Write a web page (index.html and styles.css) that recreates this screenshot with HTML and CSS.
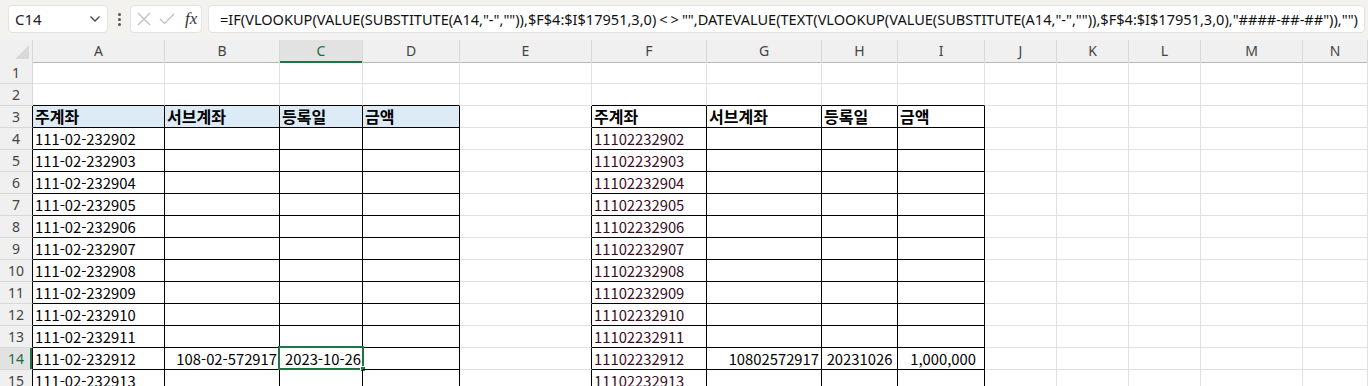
FILE: index.html
```html
<!DOCTYPE html>
<html lang="ko">
<head>
<meta charset="utf-8">
<title>Excel</title>
<link rel="stylesheet" href="styles.css">
</head>
<body>
<div class="topbar">
  <div class="namebox"><span class="nb-text">C14</span>
    <svg class="chev" width="12" height="8" viewBox="0 0 12 8"><path d="M1.5 1.5 L6 6 L10.5 1.5" fill="none" stroke="#444" stroke-width="1.3"/></svg>
  </div>
  <div class="dots"><i></i><i></i><i></i></div>
  <div class="fxbox">
    <svg width="14" height="14" viewBox="0 0 14 14"><path d="M1 1 L13 13 M13 1 L1 13" stroke="#bdbdbd" stroke-width="1.2" fill="none"/></svg>
    <svg width="16" height="12" viewBox="0 0 16 12"><path d="M1 6 L5.5 10.5 L15 1" stroke="#bdbdbd" stroke-width="1.2" fill="none"/></svg>
    <span class="fx">fx</span>
  </div>
  <div class="formula">=IF(VLOOKUP(VALUE(SUBSTITUTE(A14,"-","")),$F$4:$I$17951,3,0)<span class="ne">&lt;&gt;</span>"",DATEVALUE(TEXT(VLOOKUP(VALUE(SUBSTITUTE(A14,"-","")),$F$4:$I$17951,3,0),"####-##-##")),"")</div>
</div>

<div class="sheet">
  <div class="row hdr">
    <div class="c corner"></div><div class="c">A</div><div class="c">B</div><div class="c sel">C</div><div class="c">D</div><div class="c">E</div><div class="c">F</div><div class="c">G</div><div class="c">H</div><div class="c">I</div><div class="c">J</div><div class="c">K</div><div class="c">L</div><div class="c">M</div><div class="c">N</div>
  </div>
  <div class="row">
    <div class="c rh">1</div><div class="c"></div><div class="c"></div><div class="c"></div><div class="c"></div><div class="c"></div><div class="c"></div><div class="c"></div><div class="c"></div><div class="c"></div><div class="c"></div><div class="c"></div><div class="c"></div><div class="c"></div><div class="c"></div>
  </div>
  <div class="row">
    <div class="c rh">2</div><div class="c tb"></div><div class="c tb"></div><div class="c tb"></div><div class="c tb"></div><div class="c"></div><div class="c tb"></div><div class="c tb"></div><div class="c tb"></div><div class="c tb"></div><div class="c"></div><div class="c"></div><div class="c"></div><div class="c"></div><div class="c"></div>
  </div>
  <div class="row">
    <div class="c rh tl">3</div><div class="c t th">주계좌</div><div class="c t th">서브계좌</div><div class="c t th">등록일</div><div class="c t th">금액</div><div class="c tl"></div><div class="c t bold">주계좌</div><div class="c t bold">서브계좌</div><div class="c t bold">등록일</div><div class="c t bold">금액</div><div class="c"></div><div class="c"></div><div class="c"></div><div class="c"></div><div class="c"></div>
  </div>
  <div class="row">
    <div class="c rh tl">4</div><div class="c t">111-02-232902</div><div class="c t"></div><div class="c t"></div><div class="c t"></div><div class="c tl"></div><div class="c t num">11102232902</div><div class="c t"></div><div class="c t"></div><div class="c t"></div><div class="c"></div><div class="c"></div><div class="c"></div><div class="c"></div><div class="c"></div>
  </div>
  <div class="row">
    <div class="c rh tl">5</div><div class="c t">111-02-232903</div><div class="c t"></div><div class="c t"></div><div class="c t"></div><div class="c tl"></div><div class="c t num">11102232903</div><div class="c t"></div><div class="c t"></div><div class="c t"></div><div class="c"></div><div class="c"></div><div class="c"></div><div class="c"></div><div class="c"></div>
  </div>
  <div class="row">
    <div class="c rh tl">6</div><div class="c t">111-02-232904</div><div class="c t"></div><div class="c t"></div><div class="c t"></div><div class="c tl"></div><div class="c t num">11102232904</div><div class="c t"></div><div class="c t"></div><div class="c t"></div><div class="c"></div><div class="c"></div><div class="c"></div><div class="c"></div><div class="c"></div>
  </div>
  <div class="row">
    <div class="c rh tl">7</div><div class="c t">111-02-232905</div><div class="c t"></div><div class="c t"></div><div class="c t"></div><div class="c tl"></div><div class="c t num">11102232905</div><div class="c t"></div><div class="c t"></div><div class="c t"></div><div class="c"></div><div class="c"></div><div class="c"></div><div class="c"></div><div class="c"></div>
  </div>
  <div class="row">
    <div class="c rh tl">8</div><div class="c t">111-02-232906</div><div class="c t"></div><div class="c t"></div><div class="c t"></div><div class="c tl"></div><div class="c t num">11102232906</div><div class="c t"></div><div class="c t"></div><div class="c t"></div><div class="c"></div><div class="c"></div><div class="c"></div><div class="c"></div><div class="c"></div>
  </div>
  <div class="row">
    <div class="c rh tl">9</div><div class="c t">111-02-232907</div><div class="c t"></div><div class="c t"></div><div class="c t"></div><div class="c tl"></div><div class="c t num">11102232907</div><div class="c t"></div><div class="c t"></div><div class="c t"></div><div class="c"></div><div class="c"></div><div class="c"></div><div class="c"></div><div class="c"></div>
  </div>
  <div class="row">
    <div class="c rh tl">10</div><div class="c t">111-02-232908</div><div class="c t"></div><div class="c t"></div><div class="c t"></div><div class="c tl"></div><div class="c t num">11102232908</div><div class="c t"></div><div class="c t"></div><div class="c t"></div><div class="c"></div><div class="c"></div><div class="c"></div><div class="c"></div><div class="c"></div>
  </div>
  <div class="row">
    <div class="c rh tl">11</div><div class="c t">111-02-232909</div><div class="c t"></div><div class="c t"></div><div class="c t"></div><div class="c tl"></div><div class="c t num">11102232909</div><div class="c t"></div><div class="c t"></div><div class="c t"></div><div class="c"></div><div class="c"></div><div class="c"></div><div class="c"></div><div class="c"></div>
  </div>
  <div class="row">
    <div class="c rh tl">12</div><div class="c t">111-02-232910</div><div class="c t"></div><div class="c t"></div><div class="c t"></div><div class="c tl"></div><div class="c t num">11102232910</div><div class="c t"></div><div class="c t"></div><div class="c t"></div><div class="c"></div><div class="c"></div><div class="c"></div><div class="c"></div><div class="c"></div>
  </div>
  <div class="row">
    <div class="c rh tl">13</div><div class="c t">111-02-232911</div><div class="c t"></div><div class="c t"></div><div class="c t"></div><div class="c tl"></div><div class="c t num">11102232911</div><div class="c t"></div><div class="c t"></div><div class="c t"></div><div class="c"></div><div class="c"></div><div class="c"></div><div class="c"></div><div class="c"></div>
  </div>
  <div class="row">
    <div class="c rh tl selrow">14</div><div class="c t">111-02-232912</div><div class="c t r">108-02-572917</div><div class="c t active">2023-10-26<span class="selbox"></span><span class="handle"></span></div><div class="c t"></div><div class="c tl"></div><div class="c t num">11102232912</div><div class="c t r">10802572917</div><div class="c t ctr">20231026</div><div class="c t r amt">1,000,000</div><div class="c"></div><div class="c"></div><div class="c"></div><div class="c"></div><div class="c"></div>
  </div>
  <div class="row">
    <div class="c rh tl">15</div><div class="c t">111-02-232913</div><div class="c t"></div><div class="c t"></div><div class="c t"></div><div class="c tl"></div><div class="c t num">11102232913</div><div class="c t"></div><div class="c t"></div><div class="c t"></div><div class="c"></div><div class="c"></div><div class="c"></div><div class="c"></div><div class="c"></div>
  </div>
</div>
</body>
</html>
```

FILE: styles.css
```css
* { box-sizing: border-box; }
html, body { margin: 0; padding: 0; }
body {
  width: 1368px;
  height: 386px;
  overflow: hidden;
  background: #ffffff;
  font-family: "Noto Sans CJK KR", "Noto Sans", sans-serif;
  color: #000;
}

.topbar {
  height: 40px;
  background: #f3f2ee;
  display: flex;
  align-items: flex-start;
  padding: 5px 0 0 8px;
}
.namebox {
  width: 100px;
  height: 28px;
  background: #fff;
  border: 1px solid #e2e2e2;
  border-radius: 4px;
  display: flex;
  align-items: center;
  justify-content: space-between;
  padding: 0 6px 0 6px;
}
.nb-text { font-family: "Noto Sans", sans-serif; font-size: 15px; color: #222; }
.dots {
  width: 22px;
  height: 28px;
  display: flex;
  flex-direction: column;
  align-items: center;
  justify-content: center;
  gap: 2px;
}
.dots i { width: 3px; height: 3px; border-radius: 50%; background: #555; display: block; }
.fxbox {
  width: 72px;
  height: 28px;
  background: #fff;
  border: 1px solid #e2e2e2;
  border-radius: 4px;
  display: flex;
  align-items: center;
  gap: 8px;
  padding-left: 6px;
}
.fx {
  font-family: "Liberation Serif", "DejaVu Serif", serif;
  font-style: italic;
  font-size: 17px;
  color: #333;
  margin-left: 2px;
}
.formula {
  margin-left: 6px;
  width: 1157px;
  height: 28px;
  background: #fff;
  border: 1px solid #e2e2e2;
  border-radius: 4px;
  padding-left: 11px;
  font-family: "Noto Sans", sans-serif;
  font-size: 14.55px;
  line-height: 26px;
  color: #111;
  white-space: nowrap;
  overflow: hidden;
}
.ne { letter-spacing: 3px; padding-left: 3px; }

.sheet { display: flex; flex-direction: column; }
.row {
  display: grid;
  grid-template-columns: 33px 132px 115px 83px 97px 132px 115px 115px 76px 87px 72px 72px 72px 102px 65px;
  height: 22px;
}
.c {
  border-right: 1px solid #e1e1e1;
  border-bottom: 1px solid #e1e1e1;
  font-size: 14.8px;
  line-height: 21px;
  padding-left: 2px;
  white-space: nowrap;
  overflow: visible;
  position: relative;
}
.hdr .c {
  background: #f0f0f0;
  border-right: 1px solid #d8d8d8;
  border-bottom: 1px solid #b8b8b8;
  font-family: "Noto Sans", sans-serif;
  font-size: 14px;
  color: #444;
  text-align: center;
  padding-left: 0;
}
.hdr .c.sel {
  background: #e2e2e2;
  border-bottom: 2px solid #217346;
  color: #1e6b41;
}
.corner::after {
  content: "";
  position: absolute;
  right: 3px;
  bottom: 3px;
  width: 0;
  height: 0;
  border-left: 14px solid transparent;
  border-bottom: 14px solid #d9d9d9;
}
.rh {
  background: #f0f0f0;
  border-right: 1px solid #d8d8d8;
  border-bottom: 1px solid #d8d8d8;
  font-family: "Noto Sans", sans-serif;
  font-size: 14px;
  color: #444;
  text-align: center;
  padding-left: 0;
}
.rh.tl { border-right-color: #000; }
.rh.selrow {
  background: #e2e2e2;
  color: #1e6b41;
  box-shadow: inset -2px 0 0 #217346;
}
.tb { border-bottom-color: #000; }
.tl { border-right-color: #000; }
.t { border-right-color: #000; border-bottom-color: #000; }
.th { background: #ddebf7; font-weight: 700; font-size: 16px; }
.bold { font-weight: 700; font-size: 16px; }
.num { color: #3a0c1e; }
.r { text-align: right; padding-right: 2px; }
.ctr { text-align: center; padding-left: 0; }
.amt { padding-right: 8px; }
.active { padding-left: 5px; }
.selbox {
  position: absolute;
  left: -2px;
  top: -2px;
  width: 86px;
  height: 24px;
  border: 2px solid #217346;
  pointer-events: none;
}
.handle {
  position: absolute;
  left: 80px;
  top: 18px;
  width: 6px;
  height: 6px;
  background: #217346;
  border: 1px solid #fff;
}
```
